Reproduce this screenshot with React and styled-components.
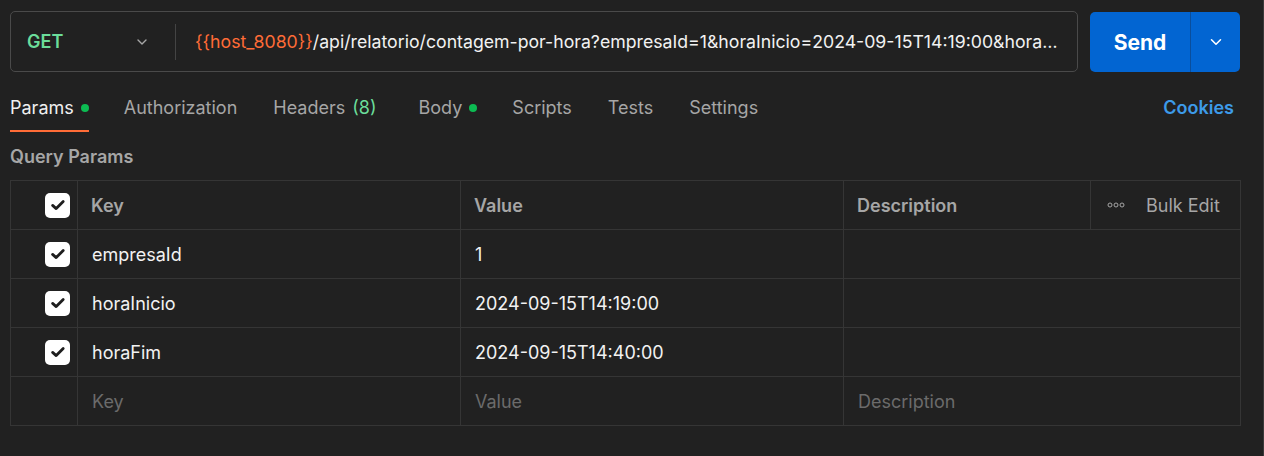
import React from "react";
import styled, { createGlobalStyle } from "styled-components";

const Global = createGlobalStyle`
  html, body { margin: 0; padding: 0; background: #212121; }
  body { font-family: Inter, "Noto Sans", sans-serif; color: #fff; }
  * { box-sizing: border-box; }
`;

const Page = styled.div`
  width: 1264px;
  height: 456px;
  background: #212121;
  padding: 11px 23px 0 10px;
  border-right: 1px solid #3a3a3a;
  overflow: hidden;
`;

const TopBar = styled.div`
  display: flex;
  gap: 12px;
  height: 61px;
`;

const UrlBox = styled.div`
  flex: 1;
  min-width: 0;
  display: flex;
  align-items: center;
  border: 1px solid #4a4a4a;
  border-radius: 5px;
  height: 61px;
`;

const Method = styled.div`
  width: 164px;
  display: flex;
  align-items: center;
  justify-content: space-between;
  padding: 0 25px 0 16px;
  color: #6bdd9a;
  font-weight: 600;
  font-size: 18px;
`;

const Divider = styled.div`
  width: 1px;
  height: 36px;
  background: #444;
`;

const Url = styled.div`
  flex: 1;
  min-width: 0;
  padding: 0 10px 0 19px;
  font-size: 17.7px;
  white-space: nowrap;
  overflow: hidden;
  text-overflow: ellipsis;
  color: #f2f2f2;
`;

const Var = styled.span`
  color: #ff6c37;
`;

const SendGroup = styled.div`
  display: flex;
  width: 150px;
  height: 60px;
  margin-top: 1px;
  background: #0265d2;
  border-radius: 5px;
  overflow: hidden;
`;

const SendBtn = styled.div`
  width: 101px;
  display: flex;
  align-items: center;
  justify-content: center;
  font-weight: 700;
  font-size: 21px;
  color: #fff;
  border-right: 1px solid #0a4e9c;
`;

const SendMore = styled.div`
  flex: 1;
  display: flex;
  align-items: center;
  justify-content: center;
  color: #fff;
`;

const Tabs = styled.div`
  display: flex;
  align-items: stretch;
  height: 60px;
`;

const Tab = styled.div`
  display: flex;
  align-items: center;
  gap: 7px;
  margin-right: ${(p) => p.$gap}px;
  font-size: 18px;
  color: ${(p) => (p.$active ? "#f0f0f0" : "#a6a6a6")};
  border-bottom: 2px solid ${(p) => (p.$active ? "#ff6c37" : "transparent")};
  padding-top: 13px;
  height: 60px;
`;

const Count = styled.span`
  color: #6bdd9a;
`;

const Dot = styled.span`
  width: 8px;
  height: 8px;
  border-radius: 50%;
  background: #0cbb52;
  display: inline-block;
`;

const Spacer = styled.div`
  flex: 1;
`;

const Cookies = styled.div`
  display: flex;
  align-items: center;
  padding-top: 13px;
  padding-bottom: 2px;
  height: 60px;
  color: #3d9be9;
  font-weight: 600;
  font-size: 18px;
  padding-right: 6px;
`;

const SectionTitle = styled.div`
  font-size: 18px;
  font-weight: 600;
  line-height: 22px;
  color: #a6a6a6;
  margin: 14px 0 12px;
`;

const Table = styled.div`
  width: 1231px;
  border: 1px solid #353535;
  border-bottom: none;
`;

const Row = styled.div`
  display: grid;
  grid-template-columns: 67px 383px 383px 1fr;
  height: 49px;
  border-bottom: 1px solid #353535;
`;

const Cell = styled.div`
  display: flex;
  align-items: center;
  padding-left: ${(p) => p.$pad ?? 14}px;
  border-right: ${(p) => (p.$last ? "none" : "1px solid #353535")};
  font-size: 18px;
  font-weight: ${(p) => (p.$head ? 600 : 400)};
  color: ${(p) => (p.$head ? "#a6a6a6" : p.$placeholder ? "#6b6b6b" : "#f2f2f2")};
  min-width: 0;
`;

const CheckCell = styled(Cell)`
  justify-content: flex-end;
  padding-left: 0;
  padding-right: 7px;
`;

const DescHead = styled.div`
  display: grid;
  grid-template-columns: 246px 1fr;
  width: 100%;
  height: 100%;
`;

const BulkEdit = styled.div`
  display: flex;
  align-items: center;
  gap: 21px;
  padding-left: 16px;
  border-left: 1px solid #353535;
  color: #a6a6a6;
  font-size: 18px;
`;

const Box = styled.div`
  width: 25px;
  height: 25px;
  border-radius: 5px;
  background: #fff;
  display: flex;
  align-items: center;
  justify-content: center;
`;

const Check = () => (
  <Box>
    <svg width="18" height="18" viewBox="0 0 18 18">
      <path d="M3.6 9.4 L7.2 12.6 L14.2 5.4" fill="none" stroke="#1e1e1e" strokeWidth="2.8" strokeLinecap="round" strokeLinejoin="round" />
    </svg>
  </Box>
);

const Chevron = ({ color = "#a6a6a6", size = 16 }) => (
  <svg width={size} height={size} viewBox="0 0 16 16">
    <path d="M4 6 L8 10 L12 6" fill="none" stroke={color} strokeWidth="1.4" strokeLinecap="round" strokeLinejoin="round" />
  </svg>
);

const Dots = () => (
  <svg width="18" height="8" viewBox="0 0 18 8">
    {[3, 9, 15].map((cx) => (
      <circle key={cx} cx={cx} cy="4" r="2" fill="none" stroke="#a6a6a6" strokeWidth="1" />
    ))}
  </svg>
);

const params = [
  ["empresaId", "1"],
  ["horaInicio", "2024-09-15T14:19:00"],
  ["horaFim", "2024-09-15T14:40:00"],
];

export default function App() {
  return (
    <>
      <Global />
      <Page>
        <TopBar>
          <UrlBox>
            <Method>
              GET
              <Chevron />
            </Method>
            <Divider />
            <Url>
              <Var>{"{{host_8080}}"}</Var>
              /api/relatorio/contagem-por-hora?empresaId=1&amp;horaInicio=2024-09-15T14:19:00&amp;horaFim=2024-09-15T14:40:00
            </Url>
          </UrlBox>
          <SendGroup>
            <SendBtn>Send</SendBtn>
            <SendMore>
              <Chevron color="#fff" size={18} />
            </SendMore>
          </SendGroup>
        </TopBar>
        <Tabs>
          <Tab $active $gap={35}>
            Params <Dot />
          </Tab>
          <Tab $gap={36}>Authorization</Tab>
          <Tab $gap={42}>
            Headers <Count>(8)</Count>
          </Tab>
          <Tab $gap={35}>
            Body <Dot />
          </Tab>
          <Tab $gap={36}>Scripts</Tab>
          <Tab $gap={36}>Tests</Tab>
          <Tab $gap={0}>Settings</Tab>
          <Spacer />
          <Cookies>Cookies</Cookies>
        </Tabs>
        <SectionTitle>Query Params</SectionTitle>
        <Table>
          <Row>
            <CheckCell>
              <Check />
            </CheckCell>
            <Cell $head $pad={13}>Key</Cell>
            <Cell $head $pad={13}>Value</Cell>
            <Cell $last $pad={0}>
              <DescHead>
                <Cell $head $last $pad={13}>Description</Cell>
                <BulkEdit>
                  <Dots />
                  Bulk Edit
                </BulkEdit>
              </DescHead>
            </Cell>
          </Row>
          {params.map(([k, v]) => (
            <Row key={k}>
              <CheckCell>
                <Check />
              </CheckCell>
              <Cell>{k}</Cell>
              <Cell>{v}</Cell>
              <Cell $last />
            </Row>
          ))}
          <Row>
            <CheckCell />
            <Cell $placeholder>Key</Cell>
            <Cell $placeholder>Value</Cell>
            <Cell $placeholder $last>Description</Cell>
          </Row>
        </Table>
      </Page>
    </>
  );
}
